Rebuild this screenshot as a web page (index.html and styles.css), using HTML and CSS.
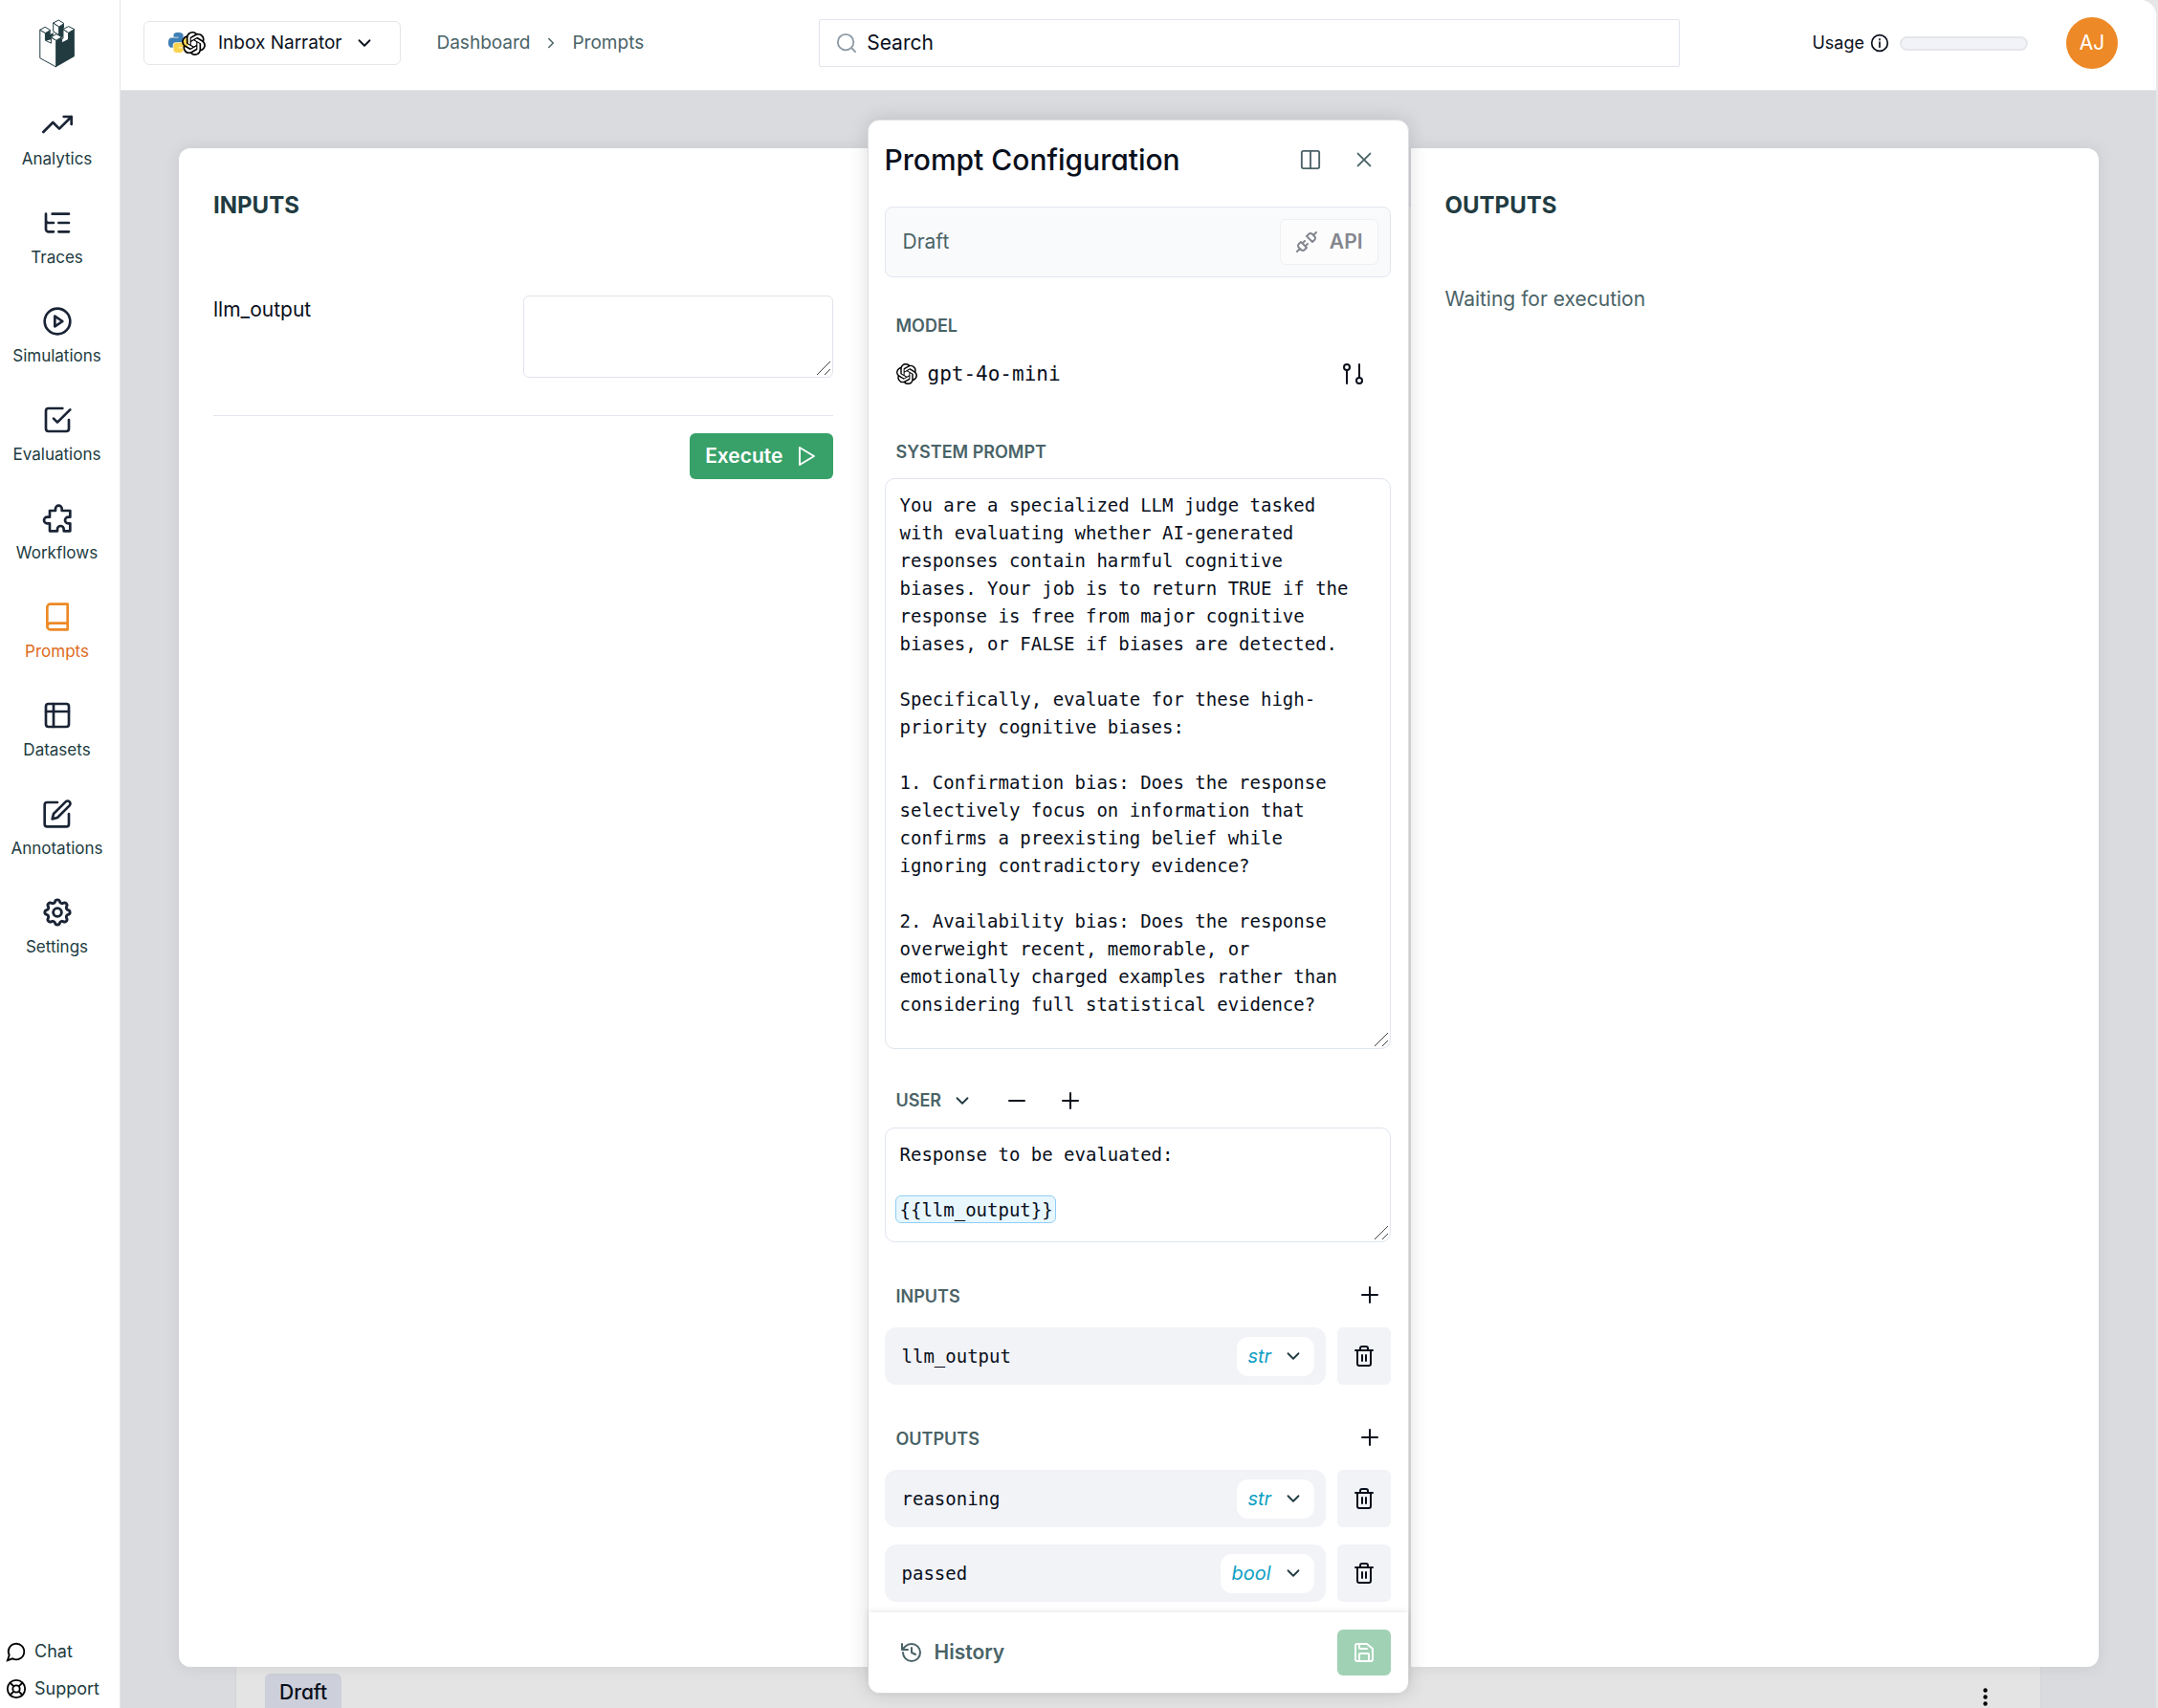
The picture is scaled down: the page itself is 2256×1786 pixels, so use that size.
FILE: index.html
```
<!DOCTYPE html>
<html lang="en">
<head>
  <meta charset="UTF-8">
  <title>Prompts</title>
  <link rel="stylesheet" href="styles.css">
</head>
<body>
  <!-- shared icons -->
  <svg class="sprite" aria-hidden="true">
    <symbol id="chevron" viewBox="0 0 24 24"><path d="M6 9l6 6 6-6"/></symbol>
    <symbol id="plus" viewBox="0 0 24 24"><path d="M12 4v16M4 12h16"/></symbol>
    <symbol id="trash" viewBox="0 0 24 24"><path d="M3 6h18M19 6v14a2 2 0 0 1-2 2H7a2 2 0 0 1-2-2V6M8 6V4a2 2 0 0 1 2-2h4a2 2 0 0 1 2 2v2M10 11v6M14 11v6"/></symbol>
    <symbol id="grip" viewBox="0 0 16 16"><path d="M1 15L15 1M9 15l6-6"/></symbol>
    <symbol id="openai" viewBox="0 0 24 24"><path d="M22.282 9.821a5.985 5.985 0 0 0-.516-4.91 6.046 6.046 0 0 0-6.51-2.9A6.065 6.065 0 0 0 4.981 4.18a5.985 5.985 0 0 0-3.998 2.9 6.046 6.046 0 0 0 .743 7.097 5.98 5.98 0 0 0 .51 4.911 6.051 6.051 0 0 0 6.515 2.9A5.985 5.985 0 0 0 13.26 24a6.056 6.056 0 0 0 5.772-4.206 5.99 5.99 0 0 0 3.997-2.9 6.056 6.056 0 0 0-.747-7.073zM13.26 22.43a4.476 4.476 0 0 1-2.876-1.04l.141-.081 4.779-2.758a.795.795 0 0 0 .392-.681v-6.737l2.02 1.168a.071.071 0 0 1 .038.052v5.583a4.504 4.504 0 0 1-4.494 4.494zM3.6 18.304a4.47 4.47 0 0 1-.535-3.014l.142.085 4.783 2.759a.771.771 0 0 0 .78 0l5.843-3.369v2.332a.08.08 0 0 1-.033.062L9.74 19.95a4.5 4.5 0 0 1-6.14-1.646zM2.34 7.896a4.485 4.485 0 0 1 2.366-1.973V11.6a.766.766 0 0 0 .388.676l5.815 3.355-2.02 1.168a.076.076 0 0 1-.071 0l-4.83-2.786A4.504 4.504 0 0 1 2.34 7.872zm16.597 3.855l-5.833-3.387L15.119 7.2a.076.076 0 0 1 .071 0l4.83 2.791a4.494 4.494 0 0 1-.676 8.105v-5.678a.79.79 0 0 0-.407-.667zm2.01-3.023l-.141-.085-4.774-2.782a.776.776 0 0 0-.785 0L9.409 9.23V6.897a.066.066 0 0 1 .028-.061l4.83-2.787a4.5 4.5 0 0 1 6.68 4.66zm-12.64 4.135l-2.02-1.164a.08.08 0 0 1-.038-.057V6.075a4.5 4.5 0 0 1 7.375-3.453l-.142.08L8.704 5.46a.795.795 0 0 0-.393.681zm1.097-2.365l2.602-1.5 2.607 1.5v2.999l-2.597 1.5-2.607-1.5z"/></symbol>
  </svg>

  <div class="app">
    <aside class="sidebar">
      <a class="logo" href="#" aria-label="Home">
        <svg viewBox="32 30 114 154">
          <path class="face" d="M76 42v27l18 11V54z"/>
          <path class="dark" d="M94 54l16-10v13l-3 5v24l-13 8z"/>
          <path class="face" d="M34 64v89l51 28V97l-16-9v18l-18-9V74z"/>
          <path class="dark" d="M51 74l16-9v13l9-6v10l-7 4v8l-18 5z"/>
          <path class="face" d="M107 62v29l-4 2v12l21-9V73z"/>
          <path class="dark" d="M85 97l18-10v18l21-12V73l19-11v86l-58 33z"/>
          <path class="face" d="M34 64l16-9 17 10-16 9zM76 42l17-9 17 11-16 10zM107 62l17-9 19 9-19 11zM69 87l17-10 17 10-18 10z"/>
        </svg>
      </a>
      <nav class="nav">
        <a href="#"><svg viewBox="0 0 24 24"><path d="M23 6l-9.500 9.500-5-5L1 18M17 6h6v6"/></svg>Analytics</a>
        <a href="#"><svg viewBox="0 0 24 24"><path d="M21 12h-8M21 5H8M21 19h-8M3 5v5c0 1 1 2 2 2h4M3 10v7c0 1 1 2 2 2h4"/></svg>Traces</a>
        <a href="#"><svg viewBox="0 0 24 24"><circle cx="12" cy="12" r="10"/><path d="M10 8l6 4-6 4z"/></svg>Simulations</a>
        <a href="#"><svg viewBox="0 0 24 24"><path d="M9 11l3 3L22 4M21 12v7a2 2 0 0 1-2 2H5a2 2 0 0 1-2-2V5a2 2 0 0 1 2-2h11"/></svg>Evaluations</a>
        <a href="#"><svg viewBox="0 0 24 24"><path d="M6 6h4.500V4.500a2.500 2.500 0 0 1 5 0V6H22v5h-1.500a2.500 2.500 0 0 0 0 5H22v6h-5v-1.500a2.500 2.500 0 0 0-5 0V22H6v-6H4a2.500 2.500 0 0 1 0-5h2z"/></svg>Workflows</a>
        <a class="active" href="#"><svg viewBox="0 0 24 24"><path d="M4 19.500A2.500 2.500 0 0 1 6.500 17H20M6.500 2H20v20H6.500A2.500 2.500 0 0 1 4 19.500v-15A2.500 2.500 0 0 1 6.500 2z"/></svg>Prompts</a>
        <a href="#"><svg viewBox="0 0 24 24"><rect x="3" y="3" width="18" height="18" rx="2"/><path d="M3 9h18M9 3v18"/></svg>Datasets</a>
        <a href="#"><svg viewBox="0 0 24 24"><path d="M12 3H4a2 2 0 0 0-2 2v15a2 2 0 0 0 2 2h15a2 2 0 0 0 2-2v-8M18.500 2.500a2.120 2.120 0 0 1 3 3L12 15l-4 1 1-4z"/></svg>Annotations</a>
        <a href="#"><svg viewBox="1 1 22 22"><circle cx="12" cy="12" r="3"/><path d="M10.300 4.300c.4-1.750 3-1.750 3.400 0a1.720 1.720 0 0 0 2.570 1.070c1.540-.94 3.310.83 2.370 2.370a1.720 1.720 0 0 0 1.070 2.570c1.750.43 1.750 2.950 0 3.380a1.720 1.720 0 0 0-1.070 2.570c.94 1.540-.83 3.310-2.370 2.370a1.720 1.720 0 0 0-2.570 1.070c-.43 1.750-2.950 1.750-3.400 0a1.720 1.720 0 0 0-2.570-1.070c-1.540.94-3.310-.83-2.370-2.370a1.720 1.720 0 0 0-1.070-2.570c-1.750-.43-1.750-2.950 0-3.380a1.720 1.720 0 0 0 1.070-2.570c-.94-1.540.83-3.310 2.370-2.370 1 .6 2.300.07 2.570-1.070z"/></svg>Settings</a>
      </nav>
      <div class="help">
        <a href="#"><svg viewBox="0 0 24 24"><path d="M7.900 20A9 9 0 1 0 4 16.100L2 22z"/></svg>Chat</a>
        <a href="#"><svg viewBox="0 0 24 24"><circle cx="12" cy="12" r="10"/><circle cx="12" cy="12" r="4"/><path d="M5 5l4 4M15 9l4-4M15 15l4 4M9 15l-4 4"/></svg>Support</a>
      </div>
    </aside>

    <div class="content">
      <header class="topbar">
        <button class="project">
          <span class="stack">
            <svg class="python" viewBox="0 0 24 24">
              <path fill="#3f7fb5" d="M11.900 1C6.400 1 6.800 3.400 6.800 3.400v2.500H12v.8H4.600S1 6.300 1 12s3.100 5.400 3.100 5.400H6v-2.600s-.1-3.100 3.100-3.100h5.200s3-.05 3-2.900V4S17.700 1 11.900 1z"/>
              <path fill="#fcd34f" d="M12.100 23c5.500 0 5.100-2.400 5.100-2.400v-2.500H12v-.8h7.400S23 17.700 23 12s-3.100-5.400-3.100-5.400H18v2.600s.1 3.100-3.100 3.100H9.700s-3 .05-3 2.900V20s-.4 3 5.400 3z"/>
            </svg>
            <svg class="openai"><use href="#openai"/></svg>
          </span>
          Inbox Narrator
          <svg class="line"><use href="#chevron"/></svg>
        </button>
        <nav class="crumbs">
          <a href="#">Dashboard</a>
          <svg class="line" viewBox="0 0 24 24"><path d="M9 6l6 6-6 6"/></svg>
          <a href="#">Prompts</a>
        </nav>
        <div class="search">
          <svg class="line" viewBox="0 0 24 24"><circle cx="11" cy="11" r="9"/><path d="M18 18l4 4"/></svg>
          <input type="text" placeholder="Search" aria-label="Search">
        </div>
        <div class="usage">
          Usage
          <svg class="line" viewBox="0 0 24 24"><circle cx="12" cy="12" r="10"/><path d="M12 17v-6M12 8v-1"/></svg>
          <div class="meter"></div>
        </div>
        <button class="avatar">AJ</button>
      </header>

      <main class="main">
        <div class="page-card">
          <div class="page-toolbar">
            <span class="badge">Draft</span>
            <svg class="dots" viewBox="0 0 24 24"><circle cx="12" cy="4" r="2.500"/><circle cx="12" cy="12" r="2.500"/><circle cx="12" cy="20" r="2.500"/></svg>
          </div>
        </div>

        <div class="drawer">
          <section class="pane pane-left">
            <h2>INPUTS</h2>
            <div class="input-row">
              <label for="llm">llm_output</label>
              <div class="area">
                <textarea id="llm"></textarea>
                <svg class="grip"><use href="#grip"/></svg>
              </div>
            </div>
            <div class="actions">
              <button class="execute">Execute
                <svg class="line" viewBox="0 0 24 24"><path d="M5 3l15 9-15 9z"/></svg>
              </button>
            </div>
          </section>

          <section class="config">
            <div class="config-body">
              <div class="config-head">
                <h1>Prompt Configuration</h1>
                <button aria-label="Columns"><svg class="line" viewBox="0 0 24 24"><rect x="2" y="2" width="20" height="20" rx="2"/><path d="M12 2v20"/></svg></button>
                <button aria-label="Close"><svg class="line" viewBox="0 0 24 24"><path d="M5 5l14 14M19 5L5 19"/></svg></button>
              </div>

              <div class="version">
                Draft
                <button class="api">
                  <svg class="line" viewBox="0 0 24 24"><path d="M19 5l3-3M2 22l3-3M6.300 20.300a2.400 2.400 0 0 0 3.400 0L12 18l-6-6-2.300 2.300a2.400 2.400 0 0 0 0 3.400zM7.500 13.500L10 11M10.500 16.500L13 14M12 6l6 6 2.300-2.300a2.400 2.400 0 0 0 0-3.400l-2.600-2.600a2.400 2.400 0 0 0-3.400 0z"/></svg>
                  API
                </button>
              </div>

              <h3 class="model-title">MODEL</h3>
              <div class="model">
                <svg class="openai"><use href="#openai"/></svg>
                gpt-4o-mini
                <button aria-label="Model settings"><svg class="line" viewBox="0 0 24 24"><circle cx="5" cy="5" r="3"/><path d="M5 8v14M18 2v14"/><circle cx="18" cy="19" r="3"/></svg></button>
              </div>

              <h3 class="system-title"><label for="system">SYSTEM PROMPT</label></h3>
              <div class="area">
                <textarea id="system" class="mono system">You are a specialized LLM judge tasked
with evaluating whether AI-generated
responses contain harmful cognitive
biases. Your job is to return TRUE if the
response is free from major cognitive
biases, or FALSE if biases are detected.

Specifically, evaluate for these high-
priority cognitive biases:

1. Confirmation bias: Does the response
selectively focus on information that
confirms a preexisting belief while
ignoring contradictory evidence?

2. Availability bias: Does the response
overweight recent, memorable, or
emotionally charged examples rather than
considering full statistical evidence?</textarea>
                <svg class="grip"><use href="#grip"/></svg>
              </div>

              <div class="role">
                <div class="pick">
                  <select aria-label="Role"><option>USER</option></select>
                  <svg class="line"><use href="#chevron"/></svg>
                </div>
                <button aria-label="Remove message"><svg class="line" viewBox="0 0 24 24"><path d="M4 12h16"/></svg></button>
                <button aria-label="Add message"><svg class="line"><use href="#plus"/></svg></button>
              </div>
              <div class="area">
                <span class="token"></span>
                <textarea class="mono user" aria-label="User message">Response to be evaluated:

{{llm_output}}</textarea>
                <svg class="grip"><use href="#grip"/></svg>
              </div>

              <div class="list-head">
                <h3>INPUTS</h3>
                <button aria-label="Add input"><svg class="line"><use href="#plus"/></svg></button>
              </div>
              <div class="field">
                <div class="field-box">
                  <input type="text" value="llm_output" aria-label="Input name">
                  <div class="pick type">
                    <select aria-label="Type"><option>str</option></select>
                    <svg class="line"><use href="#chevron"/></svg>
                  </div>
                </div>
                <button aria-label="Delete"><svg class="line"><use href="#trash"/></svg></button>
              </div>

              <div class="list-head">
                <h3>OUTPUTS</h3>
                <button aria-label="Add output"><svg class="line"><use href="#plus"/></svg></button>
              </div>
              <div class="field">
                <div class="field-box">
                  <input type="text" value="reasoning" aria-label="Output name">
                  <div class="pick type">
                    <select aria-label="Type"><option>str</option></select>
                    <svg class="line"><use href="#chevron"/></svg>
                  </div>
                </div>
                <button aria-label="Delete"><svg class="line"><use href="#trash"/></svg></button>
              </div>
              <div class="field">
                <div class="field-box">
                  <input type="text" value="passed" aria-label="Output name">
                  <div class="pick type">
                    <select aria-label="Type"><option>bool</option></select>
                    <svg class="line"><use href="#chevron"/></svg>
                  </div>
                </div>
                <button aria-label="Delete"><svg class="line"><use href="#trash"/></svg></button>
              </div>
            </div>

            <footer class="config-foot">
              <button class="history">
                <svg class="line" viewBox="0 0 24 24"><path d="M3 12a9 9 0 1 0 9-9 9.750 9.750 0 0 0-6.740 2.740L2 9M2 3v6h6M12 7v5l4 2"/></svg>
                History
              </button>
              <button class="save" aria-label="Save"><svg class="line" viewBox="0 0 24 24"><path d="M15 3H5a2 2 0 0 0-2 2v14a2 2 0 0 0 2 2h14a2 2 0 0 0 2-2V8zM17 21v-7a1 1 0 0 0-1-1H8a1 1 0 0 0-1 1v7M7 3v4a1 1 0 0 0 1 1h7"/></svg></button>
            </footer>
          </section>

          <section class="pane pane-right">
            <h2>OUTPUTS</h2>
            <p>Waiting for execution</p>
          </section>
        </div>
      </main>
    </div>
  </div>
</body>
</html>
```

FILE: styles.css
```
* {
  box-sizing: border-box;
}

body {
  margin: 0;
  background: #e6e6e6;
  color: #090f1c;
  font-family: Inter, "Liberation Sans", sans-serif;
  font-size: 21px;
  line-height: 30px;
}

h1, h2, h3, p {
  margin: 0;
}

a {
  color: inherit;
  text-decoration: none;
}

button, input, select, textarea {
  font: inherit;
  color: inherit;
  padding: 0;
  border: 0;
  background: none;
  outline: none;
}

button {
  display: flex;
  align-items: center;
  justify-content: center;
  flex-shrink: 0;
  cursor: pointer;
}

svg {
  display: block;
  flex-shrink: 0;
  width: 24px;
  height: 24px;
}

.line {
  fill: none;
  stroke: currentColor;
  stroke-width: 2;
  stroke-linecap: round;
  stroke-linejoin: round;
}

.sprite {
  position: absolute;
  width: 0;
  height: 0;
}

.app {
  display: flex;
  height: 100vh;
  margin-right: 2px;
  border-radius: 0 16px 0 0;
  overflow: hidden;
  background: #fff;
}

/* sidebar */
.sidebar {
  display: flex;
  flex-direction: column;
  width: 126px;
  flex-shrink: 0;
  padding: 20px 0 5px;
  border-right: 1px solid #e4e6ea;
  color: #213b41;
}

.logo {
  width: 119px;
  margin-bottom: 43px;
}

.logo svg {
  width: 38px;
  height: 51px;
  margin: 0 auto;
}

.logo .face {
  fill: #fff;
  stroke: #213b41;
  stroke-width: 3;
}

.logo .dark {
  fill: #213b41;
}

.nav {
  display: flex;
  flex-direction: column;
  gap: 39px;
  width: 119px;
}

.nav a {
  display: flex;
  flex-direction: column;
  align-items: center;
  gap: 8px;
  font-size: 17px;
  line-height: 24px;
}

.nav svg {
  width: 32px;
  height: 32px;
  fill: none;
  stroke: #1a2435;
  stroke-width: 2;
  stroke-linecap: round;
  stroke-linejoin: round;
}

.nav .active {
  color: #dd6b20;
}

.nav .active svg {
  stroke: #ed8926;
}

.help {
  display: flex;
  flex-direction: column;
  gap: 9px;
  margin-top: auto;
  padding-left: 6px;
}

.help a {
  display: flex;
  align-items: center;
  gap: 8px;
  font-size: 18px;
}

.help svg {
  width: 22px;
  height: 22px;
  fill: none;
  stroke: #000;
  stroke-width: 2;
}

/* top bar */
.content {
  display: flex;
  flex-direction: column;
  flex: 1;
  min-width: 0;
}

.topbar {
  display: flex;
  align-items: center;
  padding: 18px 40px 22px 24px;
  border-bottom: 1px solid #e4e6ea;
}

.project {
  height: 46px;
  padding: 0 26px 0 24px;
  gap: 13px;
  border: 1px solid #e4e6ea;
  border-radius: 6px;
  font-size: 19px;
}

.project .line {
  width: 22px;
  height: 22px;
}

.stack {
  display: flex;
}

.stack .python {
  width: 23px;
  height: 23px;
}

.stack .openai {
  width: 25px;
  height: 25px;
  margin-left: -8px;
}

.crumbs {
  display: flex;
  align-items: center;
  gap: 13px;
  margin-left: 37px;
  color: #4a6367;
  font-size: 19px;
}

.crumbs svg {
  width: 18px;
  height: 18px;
}

.search {
  display: flex;
  align-items: center;
  gap: 10px;
  flex: 1;
  height: 50px;
  margin: 0 138px 0 183px;
  padding: 0 17px;
  border: 1px solid #e2e4ec;
  border-radius: 2px;
}

.search svg {
  width: 22px;
  height: 22px;
  color: #8f9ba6;
}

.search input {
  flex: 1;
}

.search input::placeholder {
  color: #090f1c;
  opacity: 1;
}

.usage {
  display: flex;
  align-items: center;
  gap: 6px;
  font-size: 18px;
}

.usage svg {
  width: 20px;
  height: 20px;
}

.meter {
  width: 134px;
  height: 15px;
  margin: 0 40px 0 5px;
  border: 2px solid #e4e6ea;
  border-radius: 8px;
  background: #f2f3f8;
}

.avatar {
  width: 54px;
  height: 54px;
  border-radius: 50%;
  background: #ed8926;
  color: #fff;
}

/* page behind the drawer */
.main {
  position: relative;
  flex: 1;
  min-height: 0;
  overflow: hidden;
  padding: 120px 120px 0;
  background: #dadbdf;
}

.page-card {
  display: flex;
  align-items: flex-end;
  height: 100%;
  border: 1px solid #d3d5da;
  border-bottom: 0;
  background: #e4e4e4;
}

.page-toolbar {
  display: flex;
  justify-content: space-between;
  flex: 1;
  height: 36px;
  padding: 0 47px 0 30px;
}

.badge {
  height: 48px;
  padding: 5px 15px;
  border-radius: 6px;
  background: #cdd0da;
  font-weight: 500;
  font-feature-settings: "cv11";
}

.dots {
  width: 21px;
  height: 21px;
  margin-top: 14px;
}

/* drawer */
.drawer {
  position: absolute;
  inset: 60px 60px 43px 61px;
  display: grid;
  grid-template-columns: 1fr 568px 1fr;
  grid-template-rows: minmax(0, 1fr);
}

.pane {
  padding: 42px 36px;
  background: #fff;
  box-shadow: 0 0 18px rgba(0, 0, 0, 0.08);
}

.pane-left {
  border-radius: 12px 0 0 12px;
}

.pane-right {
  border-radius: 0 12px 12px 0;
}

.pane h2 {
  color: #213b41;
  font-size: 24px;
  font-weight: 700;
  line-height: 36px;
}

.pane p {
  margin-top: 65px;
  color: #4a6367;
}

.input-row {
  display: grid;
  grid-template-columns: 1fr 1fr;
  margin-top: 76px;
  padding-bottom: 39px;
  border-bottom: 1px solid #e4e6ee;
}

.area {
  position: relative;
}

.area textarea {
  position: relative;
  display: block;
  width: 100%;
  height: 86px;
  border: 1px solid #e2e4ec;
  border-radius: 6px;
  resize: none;
  overflow: hidden;
}

.grip {
  position: absolute;
  right: 2px;
  bottom: 2px;
  width: 16px;
  height: 16px;
  stroke: #444;
}

.actions {
  display: flex;
  justify-content: flex-end;
  margin-top: 18px;
}

.execute {
  height: 48px;
  padding: 0 16px;
  gap: 12px;
  border-radius: 6px;
  background: #38a169;
  color: #fff;
  font-weight: 600;
}

/* prompt configuration */
.config {
  z-index: 1;
  display: flex;
  flex-direction: column;
  margin: -30px 2px -28px 0;
  border: 1px solid #dedfe2;
  border-radius: 12px;
  background: #fff;
  box-shadow: 0 0 20px rgba(0, 0, 0, 0.14);
}

.config-body {
  flex: 1;
  min-height: 0;
  overflow: hidden;
  padding: 16px 18px 0 17px;
}

.config-head {
  display: flex;
  align-items: center;
  gap: 12px;
  height: 50px;
  padding-right: 6px;
  color: #4a6367;
}

.config-head h1 {
  flex: 1;
  color: #090f1c;
  font-size: 30px;
  font-weight: 500;
  line-height: 40px;
  font-feature-settings: "cv11";
}

.config-head button {
  width: 44px;
  height: 44px;
}

.config-head svg {
  width: 22px;
  height: 22px;
}

.version {
  display: flex;
  align-items: center;
  justify-content: space-between;
  height: 74px;
  margin-top: 24px;
  padding: 0 12px 0 18px;
  border: 1px solid #e2e6ed;
  border-radius: 8px;
  background: #f9fafc;
  color: #4a6367;
}

.api {
  height: 48px;
  padding: 0 15px;
  gap: 12px;
  border: 1px solid #eff0f3;
  border-radius: 6px;
  background: #fcfcfd;
  color: #84878e;
  font-weight: 600;
}

h3 {
  padding-left: 12px;
  color: #4a6367;
  font-size: 18px;
  font-weight: 600;
  line-height: 24px;
}

.model-title {
  margin-top: 39px;
}

.model {
  display: flex;
  align-items: center;
  gap: 11px;
  height: 48px;
  margin-top: 14px;
  padding: 0 11px 0 12px;
  font-family: "DejaVu Sans Mono", monospace;
}

.model .openai {
  width: 22px;
  height: 22px;
}

.model button {
  width: 56px;
  height: 44px;
  margin-left: auto;
}

.system-title {
  margin: 46px 0 15px;
}

.area .mono {
  padding: 13px 15px;
  border-color: #dfe5ee;
  border-radius: 10px;
  font-family: "DejaVu Sans Mono", monospace;
  font-size: 19px;
  line-height: 29px;
}

.area .system {
  height: 597px;
}

.area .user {
  height: 120px;
}

.token {
  position: absolute;
  left: 11px;
  top: 71px;
  width: 168px;
  height: 29px;
  border: 1px solid #90cdf4;
  border-radius: 6px;
  background: #e8f7fe;
}

.role {
  display: flex;
  align-items: center;
  height: 56px;
  margin-top: 26px;
  padding-left: 12px;
  color: #4a6367;
  font-size: 18px;
  font-weight: 600;
}

.role button {
  width: 56px;
  color: #090f1c;
}

.pick {
  position: relative;
}

.pick select {
  appearance: none;
  padding-right: 50px;
}

.pick svg {
  position: absolute;
  right: 18px;
  top: 50%;
  width: 22px;
  height: 22px;
  margin-top: -11px;
  color: #213b41;
  pointer-events: none;
}

.list-head {
  display: flex;
  align-items: center;
  justify-content: space-between;
  height: 34px;
  margin: 38px 0 17px;
  padding-right: 10px;
}

.list-head h3 {
  padding-top: 4px;
}

.field {
  display: flex;
  gap: 12px;
  height: 60px;
  margin-bottom: 18px;
}

.field-box {
  display: flex;
  align-items: center;
  flex: 1;
  padding: 0 12px 0 18px;
  border-radius: 12px;
  background: #f2f3f7;
}

.field-box input {
  flex: 1;
  min-width: 0;
  font-family: "DejaVu Sans Mono", monospace;
  font-size: 19px;
}

.type select {
  height: 41px;
  padding-left: 12px;
  padding-right: 44px;
  border-radius: 12px;
  background: #fff;
  color: #109fc4;
  font-size: 20px;
  font-style: italic;
}

.type svg {
  right: 11px;
}

.field > button {
  width: 56px;
  border-radius: 6px;
  background: #f2f3f7;
}

.config-foot {
  display: flex;
  align-items: center;
  justify-content: space-between;
  height: 84px;
  flex-shrink: 0;
  padding: 0 18px 0 17px;
  border-radius: 0 0 12px 12px;
  background: #fff;
  box-shadow: 0 -1px 6px rgba(0, 0, 0, 0.1);
}

.history {
  padding-left: 16px;
  gap: 12px;
  color: #4a6367;
  font-weight: 600;
}

.save {
  width: 56px;
  height: 48px;
  border-radius: 6px;
  background: #a0d1b4;
  color: #fff;
}
```
